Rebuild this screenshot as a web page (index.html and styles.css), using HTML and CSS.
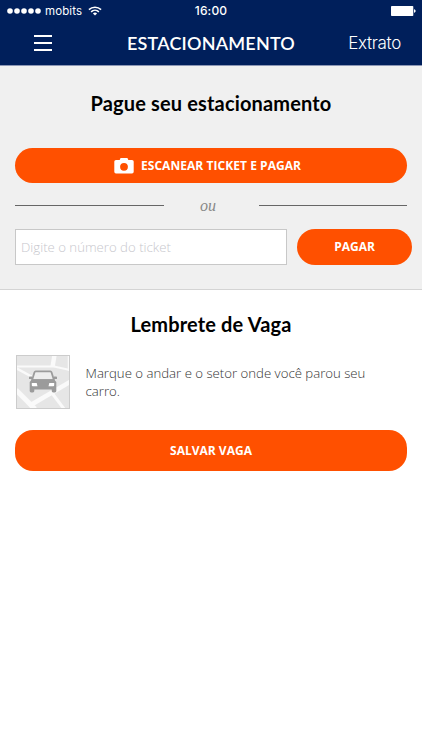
FILE: index.html
```html
<!DOCTYPE html>
<html lang="pt-BR">
<head>
<meta charset="utf-8">
<meta name="viewport" content="width=device-width, initial-scale=1">
<title>Estacionamento</title>
<link rel="stylesheet" href="styles.css">
</head>
<body>
<header class="header">
  <div class="status">
    <div class="carrier">
      <svg class="signal" width="34" height="6" viewBox="0 0 34 6" fill="#fff"><circle cx="3" cy="3" r="2.8"/><circle cx="10" cy="3" r="2.8"/><circle cx="17" cy="3" r="2.8"/><circle cx="24" cy="3" r="2.8"/><circle cx="31" cy="3" r="2.8"/></svg>
      <span class="carrier-name">mobits</span>
      <svg class="wifi" width="14" height="10" viewBox="0 0 14 10" fill="none" stroke="#fff" stroke-width="1.5"><path d="M.9 3.6a8.8 8.8 0 0 1 12.2 0"/><path d="M3.1 5.9a5.7 5.7 0 0 1 7.8 0"/><path d="M7 9.6 4.9 7.5a3 3 0 0 1 4.2 0z" fill="#fff" stroke="none"/></svg>
    </div>
    <span class="clock">16:00</span>
    <svg class="battery" width="25" height="10" viewBox="0 0 25 10" fill="#fff"><rect width="22.3" height="10" rx=".8"/><path d="M23 3.2c2.2.5 2.2 3.1 0 3.6z"/></svg>
  </div>
  <nav class="nav">
    <button class="menu" aria-label="Menu"><span></span><span></span><span></span></button>
    <h1 class="title">ESTACIONAMENTO</h1>
    <a class="extract">Extrato</a>
  </nav>
</header>
<main>
  <section class="pay">
    <h2 class="heading">Pague seu estacionamento</h2>
    <button class="btn scan">
      <svg width="20" height="16" viewBox="0 0 20 16" fill="#fff"><path fill-rule="evenodd" d="M6.2.6Q6.4 0 7 0h6q.6 0 .8.6l.5 1.3H18q1.7 0 1.7 1.7v10.2q0 1.7-1.7 1.7H2q-1.7 0-1.7-1.7V3.6Q.3 1.9 2 1.9h3.7zM10 4.9a3.9 3.9 0 1 0 0 7.8 3.9 3.9 0 0 0 0-7.8z"/></svg>
      <span>ESCANEAR TICKET E PAGAR</span>
    </button>
    <div class="divider"><span class="or">ou</span></div>
    <div class="form">
      <input class="ticket" type="text" placeholder="Digite o número do ticket">
      <button class="btn submit"><span>PAGAR</span></button>
    </div>
  </section>
  <section class="reminder">
    <h2 class="heading">Lembrete de Vaga</h2>
    <div class="note">
      <svg class="map" width="54" height="54" viewBox="0 0 54 54">
        <rect width="54" height="54" fill="#e6e6e6"/>
        <g fill="none" stroke="#fafafa">
          <path d="M0 11.5H38L54 15" stroke-width="2"/>
          <path d="M38.500 0 36.500 12" stroke-width="4.500"/>
          <path d="M0 13 20 24" stroke-width="2.500"/>
          <path d="M0 35 19 54" stroke-width="5"/>
          <path d="M13 51 54 27" stroke-width="4.500"/>
          <path d="M36 38 48 54" stroke-width="3"/>
          <path d="M52.500 0v16" stroke-width="1.500"/>
        </g>
        <g fill="#9b9b9b">
          <path fill="#ededed" stroke="#9b9b9b" stroke-width="1.800" stroke-linejoin="round" d="M18.500 17.200q.3-.9 1.200-.9h14.600q.9 0 1.200.9l2.500 8H16z"/>
          <path d="M13 22.300q0-.8.8-.8h2.200v2.500h-3zM41 22.300q0-.8-.8-.8H38v2.500h3z"/>
          <path d="M16.200 24.300h21.600l2.500 2.700v9q0 1.400-1.400 1.400h-1.800q-1.400 0-1.400-1.400v-1.600H18.300V36q0 1.400-1.400 1.400h-1.800q-1.400 0-1.400-1.400v-9z"/>
        </g>
        <path fill="#fff" d="M15.800 28h4.900l.8 3.300h-4.700q-1 0-1-1zM38.200 28h-4.900l-.8 3.300h4.700q1 0 1-1z"/>
        <rect x=".5" y=".5" width="53" height="53" fill="none" stroke="#ccc"/>
      </svg>
      <p class="text">Marque o andar e o setor onde você parou seu<br>carro.</p>
    </div>
    <button class="btn save"><span>SALVAR VAGA</span></button>
  </section>
</main>
</body>
</html>
```
FILE: styles.css
```css
* { box-sizing: border-box; }
body { margin: 0; min-height: 750px; background: #fff; font-family: "Open Sans", sans-serif; }
h1, h2, p { margin: 0; }
button { border: 0; padding: 0; background: none; font: inherit; color: inherit; }
svg { display: block; flex: none; }

.header { height: 66px; background: #001f5b; border-bottom: 1px solid #8c97b5; color: #fff; }
.status {
  display: grid;
  grid-template-columns: 1fr auto 1fr;
  align-items: center;
  height: 21px;
  padding: 0 6px 0 7px;
  font: 12px/14px Inter, sans-serif;
}
.carrier { display: flex; align-items: center; }
.carrier-name { margin-left: 4px; width: 37px; font-size: 11.5px; letter-spacing: .1px; white-space: nowrap; }
.wifi { margin-left: 6px; }
.clock { margin-left: -1px; font-weight: 500; letter-spacing: .15px; }
.battery { justify-self: end; }

.nav {
  display: grid;
  grid-template-columns: 1fr auto 1fr;
  align-items: center;
  height: 44px;
  padding: 0 21px 0 34px;
}
.menu { display: flex; flex-direction: column; gap: 5px; width: 18px; }
.menu span { height: 2px; background: #fff; }
.title { margin-left: -13px; font: 600 18px/24px Lato, sans-serif; letter-spacing: .2px; }
.extract { justify-self: end; font: 300 17px/22px Inter, sans-serif; letter-spacing: -.3px; }

.pay { height: 224px; padding: 25px 15px 0; background: #f0f0f0; border-bottom: 1px solid #d4d4d4; }
.heading { font: 700 20px/24px Lato, sans-serif; letter-spacing: .15px; text-align: center; color: #000; }
.btn {
  display: flex;
  align-items: center;
  justify-content: center;
  border-radius: 18px;
  background: #ff5000;
  color: #fff;
  font-size: 12px;
  font-weight: 700;
  line-height: 16px;
}
.scan { gap: 7px; width: 392px; height: 35px; margin-top: 33px; padding-right: 7px; letter-spacing: .05px; }
.divider { display: flex; align-items: center; height: 20px; margin-top: 12px; }
.divider::before, .divider::after { content: ""; height: 1px; background: #666; flex: 1; }
.or {
  width: 95px;
  padding: 2px 6px 0 0;
  font: italic 16px/20px "Liberation Serif", serif;
  color: #888;
  text-align: center;
}
.form { display: flex; gap: 10px; margin: 14px -5px 0 0; }
.ticket {
  width: 272px;
  height: 36px;
  padding: 0 5px;
  border: 1px solid #c8c8c8;
  border-radius: 0;
  background: #fff;
  font: 300 13.2px/18px "Open Sans", sans-serif;
}
.ticket::placeholder { color: #c7c7cd; opacity: 1; }
.submit { width: 115px; height: 36px; }

.reminder { padding: 22px 15px 0; }
.note { display: flex; align-items: center; margin: 19px 0 21px 1px; }
.text { margin-left: 15.5px; font-weight: 300; font-size: 13.2px; line-height: 18px; color: #333; white-space: nowrap; }
.save { width: 392px; height: 41px; }
```
